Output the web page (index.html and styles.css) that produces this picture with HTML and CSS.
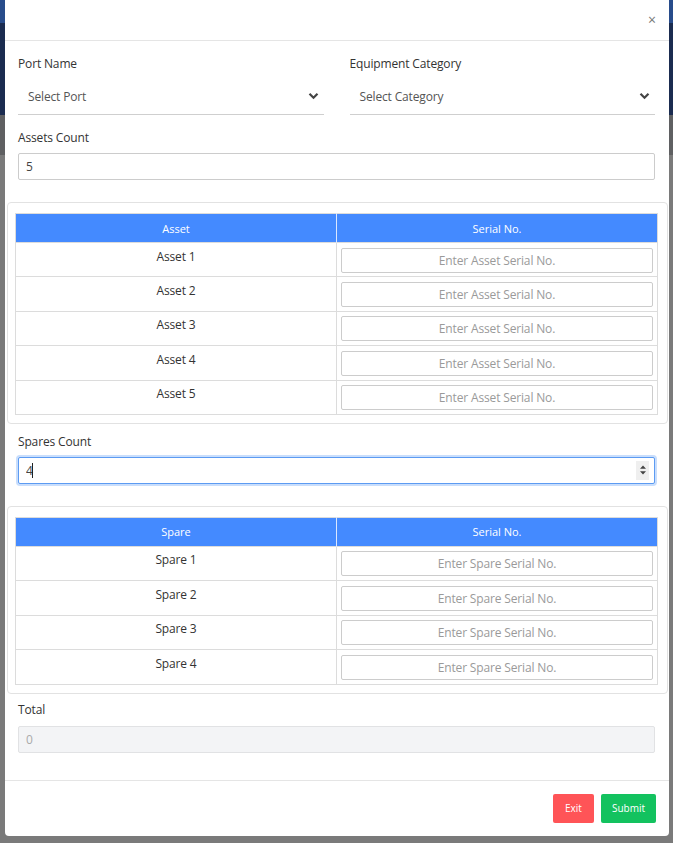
FILE: index.html
```html
<!DOCTYPE html>
<html lang="en">
<head>
<meta charset="utf-8">
<title>Add Assets</title>
<link rel="stylesheet" href="styles.css">
</head>
<body>
<div class="modal">
  <div class="modal-header">
    <button class="close" type="button">×</button>
  </div>
  <div class="modal-body">
    <div class="row">
      <div class="group">
        <label class="lbl">Port Name</label>
        <div class="select"><span>Select Port</span>
          <svg width="11" height="8" viewBox="0 0 11 8"><path d="M1.5 1.8 L5.5 5.8 L9.5 1.8" fill="none" stroke="#444" stroke-width="2.2"/></svg>
        </div>
      </div>
      <div class="group">
        <label class="lbl">Equipment Category</label>
        <div class="select"><span>Select Category</span>
          <svg width="11" height="8" viewBox="0 0 11 8"><path d="M1.5 1.8 L5.5 5.8 L9.5 1.8" fill="none" stroke="#444" stroke-width="2.2"/></svg>
        </div>
      </div>
    </div>

    <label class="lbl">Assets Count</label>
    <input class="input count" type="text" value="5">

    <div class="card card-assets">
      <table class="grid">
        <thead><tr><th>Asset</th><th>Serial No.</th></tr></thead>
        <tbody>
          <tr><td>Asset 1</td><td><input class="cell-input" placeholder="Enter Asset Serial No."></td></tr>
          <tr><td>Asset 2</td><td><input class="cell-input" placeholder="Enter Asset Serial No."></td></tr>
          <tr><td>Asset 3</td><td><input class="cell-input" placeholder="Enter Asset Serial No."></td></tr>
          <tr><td>Asset 4</td><td><input class="cell-input" placeholder="Enter Asset Serial No."></td></tr>
          <tr><td>Asset 5</td><td><input class="cell-input" placeholder="Enter Asset Serial No."></td></tr>
        </tbody>
      </table>
    </div>

    <label class="lbl">Spares Count</label>
    <div class="focus-wrap">
      <input class="input focused" type="text" value="4">
      <span class="caret"></span>
      <span class="spinner">
        <svg width="8" height="12" viewBox="0 0 8 12"><path d="M4 1.5 L7 4.8 L1 4.8 Z M4 10.5 L7 7.2 L1 7.2 Z" fill="#444"/></svg>
      </span>
    </div>

    <div class="card card-spares">
      <table class="grid">
        <thead><tr><th>Spare</th><th>Serial No.</th></tr></thead>
        <tbody>
          <tr><td>Spare 1</td><td><input class="cell-input" placeholder="Enter Spare Serial No."></td></tr>
          <tr><td>Spare 2</td><td><input class="cell-input" placeholder="Enter Spare Serial No."></td></tr>
          <tr><td>Spare 3</td><td><input class="cell-input" placeholder="Enter Spare Serial No."></td></tr>
          <tr><td>Spare 4</td><td><input class="cell-input" placeholder="Enter Spare Serial No."></td></tr>
        </tbody>
      </table>
    </div>

    <label class="lbl total-lbl">Total</label>
    <input class="input disabled" type="text" value="0" disabled>
  </div>
  <div class="modal-footer">
    <button class="btn btn-exit" type="button">Exit</button>
    <button class="btn btn-submit" type="button">Submit</button>
  </div>
</div>
</body>
</html>
```

FILE: styles.css
```css
* { box-sizing: border-box; }

html, body {
  margin: 0;
  padding: 0;
}

body {
  width: 673px;
  height: 843px;
  overflow: hidden;
  font-family: "Open Sans", "Liberation Sans", sans-serif;
  font-size: 12px;
  color: #333;
  background:
    linear-gradient(to bottom, #284c8b 0, #284c8b 23px, #1b2c50 23px, #1b2c50 115px, #5f6062 115px, #5f6062 155px, transparent 155px),
    #7a7a7a;
}

.modal {
  margin: 0 4px 0 5px;
  width: 664px;
  background: #fff;
  border-radius: 0 0 4px 4px;
}

.modal-header {
  height: 41px;
  border-bottom: 1px solid #e5e5e5;
  display: flex;
  justify-content: flex-end;
  align-items: center;
  padding-right: 13px;
}

.close {
  border: 0;
  background: none;
  padding: 0;
  font-family: "Open Sans", sans-serif;
  font-size: 14px;
  line-height: 14px;
  color: #777;
  margin-top: -1px;
}

.modal-body {
  padding: 14px 14px 27px 13px;
  display: flex;
  flex-direction: column;
}

.row {
  display: flex;
  gap: 26px;
  margin-bottom: 14px;
}

.group {
  flex: 1;
  display: flex;
  flex-direction: column;
}

.lbl {
  display: block;
  font-size: 12px;
  line-height: 17px;
  color: #333;
  margin-bottom: 7px;
  letter-spacing: -0.15px;
}

.group .lbl { margin-bottom: 8px; }

.select {
  height: 35px;
  border-bottom: 1px solid #cfcfcf;
  display: flex;
  align-items: center;
  justify-content: space-between;
  padding: 0 5px 2px 10px;
  color: #555;
  letter-spacing: -0.15px;
}

.input {
  display: block;
  width: 100%;
  height: 27px;
  border: 1px solid #cccccc;
  border-radius: 2px;
  padding: 0 7px;
  font-family: "Open Sans", "Liberation Sans", sans-serif;
  font-size: 12px;
  color: #444;
  background: #fff;
  outline: none;
}

.count { margin-bottom: 22px; }

.card {
  margin: 0 -13px 0 -11px;
  border: 1px solid #e2e2e2;
  border-radius: 4px;
  padding: 10px 9px 8px 7px;
}

.card-assets { margin-bottom: 9px; }
.card-spares { margin-bottom: 7px; }

.grid {
  width: 100%;
  border-collapse: collapse;
  table-layout: fixed;
  border: 1px solid #dcdcdc;
}

.grid th {
  height: 29px;
  background: #448aff;
  color: #fff;
  font-weight: 400;
  font-size: 11px;
  text-align: center;
  padding: 0;
  border-right: 1px solid #dbe7ff;
}

.grid th:last-child { border-right: 0; }

.grid td {
  border-top: 1px solid #dcdcdc;
  border-right: 1px solid #dcdcdc;
  text-align: center;
  vertical-align: top;
  padding: 4.5px 4px 3.9px 4px;
  font-size: 12px;
  line-height: 17px;
  color: #333;
  letter-spacing: -0.15px;
}

.grid td:last-child { border-right: 0; }

.cell-input {
  display: block;
  width: 100%;
  height: 25px;
  border: 1px solid #cccccc;
  border-radius: 2px;
  text-align: center;
  font-family: "Open Sans", "Liberation Sans", sans-serif;
  font-size: 12px;
  color: #444;
  padding: 0 6px;
  outline: none;
  letter-spacing: -0.15px;
}

.cell-input::placeholder { color: #9a9a9a; }

.focus-wrap {
  position: relative;
  margin-bottom: 22px;
}

.focused {
  border-color: #5c9bf2;
  box-shadow: 0 0 0 2px #c9defc;
}

.caret {
  position: absolute;
  left: 14px;
  top: 6px;
  width: 1px;
  height: 15px;
  background: #222;
}

.spinner {
  position: absolute;
  right: 6px;
  top: 4px;
  width: 13px;
  height: 19px;
  background: #efefef;
  display: flex;
  align-items: center;
  justify-content: center;
}

.total-lbl { margin-bottom: 8px; }

.disabled {
  background: #f3f4f6;
  border-color: #e1e2e4;
  color: #aaa;
}

.modal-footer {
  border-top: 1px solid #e5e5e5;
  padding: 13px 13px 13px 0;
  display: flex;
  justify-content: flex-end;
  gap: 7px;
}

.btn {
  height: 29px;
  border: 0;
  border-radius: 2px;
  color: #fff;
  font-family: "Open Sans", "Liberation Sans", sans-serif;
  font-size: 10px;
  padding: 0;
}

.btn-exit {
  width: 41px;
  background: #ff5457;
}

.btn-submit {
  width: 55px;
  background: #13c25f;
}
```
